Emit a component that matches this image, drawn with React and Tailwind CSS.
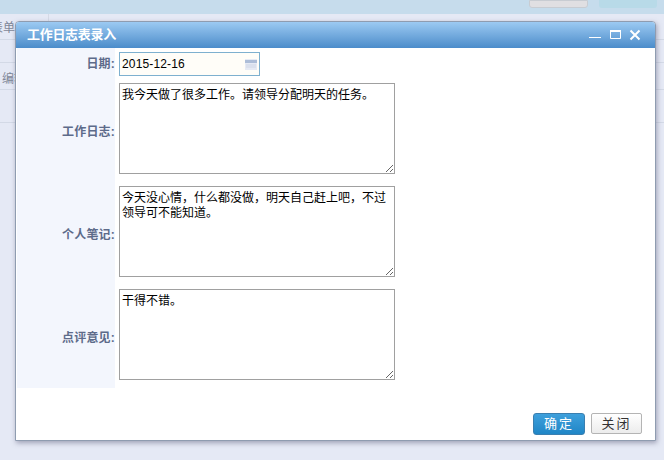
const cjk = { fontFamily: '"Liberation Sans", "Noto Sans CJK SC", sans-serif' };

function FieldRow({ label, value, last }) {
  return (
    <div className={`flex ${last ? 'h-[100px]' : 'h-[103px]'}`}>
      <div className="w-[98px] bg-[#f3f6fd] pt-[41px] text-right text-[12px] tracking-[0.2px] font-bold text-[#5d6b8a]">
        {label}:
      </div>
      <div className="pl-[4px] pt-[1px]">
        <textarea
          defaultValue={value}
          className="block w-[276px] h-[91px] border border-[#a0a0a0] bg-white px-[2px] py-[4px] text-[12px] leading-[15px] text-black outline-none"
          style={cjk}
        />
      </div>
    </div>
  );
}

export default function App() {
  return (
    <div className="relative w-[664px] h-[460px] overflow-hidden bg-[#e5e9f5]" style={cjk}>
      {/* page behind the mask */}
      <div className="h-[14px] bg-[#c6dcec] flex justify-end gap-[11px] pr-[7px]">
        <div className="w-[59px] h-[8px] rounded-b-[3px] bg-[#e0dfe2] border border-[#c8ccd2]"></div>
        <div className="w-[58px] h-[8px] rounded-b-[3px] bg-[#b8dae8]"></div>
      </div>
      <div className="h-[26px] border-b border-[#d3d9e6] flex text-[12px] text-[#7f8798]">
        <div className="w-[58px] pt-[5px] -ml-[9px] border-r border-[#d5dae6]">表单</div>
      </div>
      <div className="h-[23px] border-b border-[#d3d9e6]"></div>
      <div className="h-[27px] border-b border-[#d3d9e6] pt-[7px] pl-[2px] text-[12px] text-[#7f8798]">编辑</div>
      <div className="h-[33px] border-b border-[#d3d9e6]"></div>

      {/* dialog */}
      <div className="absolute left-[15px] top-[21px] w-[641px] h-[420px] rounded-t-[4px] border border-[#8f9cb0] bg-white shadow-[1px_2px_5px_rgba(90,90,120,0.5)]">
        <div className="h-[26px] rounded-t-[3px] bg-gradient-to-b from-[#9ccaf2] to-[#4b8cca] flex items-center justify-between pl-[11px] pr-[14px]">
          <span className="text-[13px] tracking-[-0.3px] font-bold text-white">工作日志表录入</span>
          <svg width="52" height="12" viewBox="0 0 52 12" fill="none" stroke="white">
            <path d="M0 8.5h12" strokeWidth="1" />
            <path d="M21.5 2.5h10v7h-10z" strokeWidth="1" />
            <path d="M21 2h11" strokeWidth="2" />
            <path d="M41.5 1.5l9 9M50.5 1.5l-9 9" strokeWidth="2" />
          </svg>
        </div>

        <div className="pl-px">
          <div className="flex h-[34px]">
            <div className="w-[98px] bg-[#f3f6fd] pt-[7px] text-right text-[12px] tracking-[0.2px] font-bold text-[#5d6b8a]">
              日期:
            </div>
            <div className="pl-[4px] pt-[4px]">
              <div className="w-[141px] h-[24px] border border-[#7eb0cf] bg-[#fffdf8] flex items-center justify-between pl-[2px] pr-[2px]">
                <span className="text-[12px] tracking-[0.15px] text-black">2015-12-16</span>
                <svg width="12" height="11" viewBox="0 0 12 11">
                  <rect x="0" y="0" width="12" height="11" fill="#e6eaf4" />
                  <rect x="0" y="1" width="12" height="3" fill="#adbdd8" />
                  <path d="M1 6h10M1 8h10" stroke="#cfd6e6" />
                </svg>
              </div>
            </div>
          </div>
          <FieldRow label="工作日志" value="我今天做了很多工作。请领导分配明天的任务。" />
          <FieldRow label="个人笔记" value="今天没心情，什么都没做，明天自己赶上吧，不过领导可不能知道。" />
          <FieldRow label="点评意见" value="干得不错。" last />
        </div>

        <div className="flex justify-end gap-[6px] pr-[13px] pt-[25px]">
          <button className="w-[52px] h-[22px] rounded-[3px] border border-[#3a7fb0] bg-gradient-to-b from-[#3ea0dc] to-[#1f86c6] text-[13px] tracking-[2px] text-white">
            确定
          </button>
          <button className="w-[51px] h-[21px] rounded-[2px] border border-[#b4b4b4] bg-gradient-to-b from-[#ffffff] to-[#ececec] text-[13px] tracking-[2px] text-[#333]">
            关闭
          </button>
        </div>
      </div>
    </div>
  );
}
